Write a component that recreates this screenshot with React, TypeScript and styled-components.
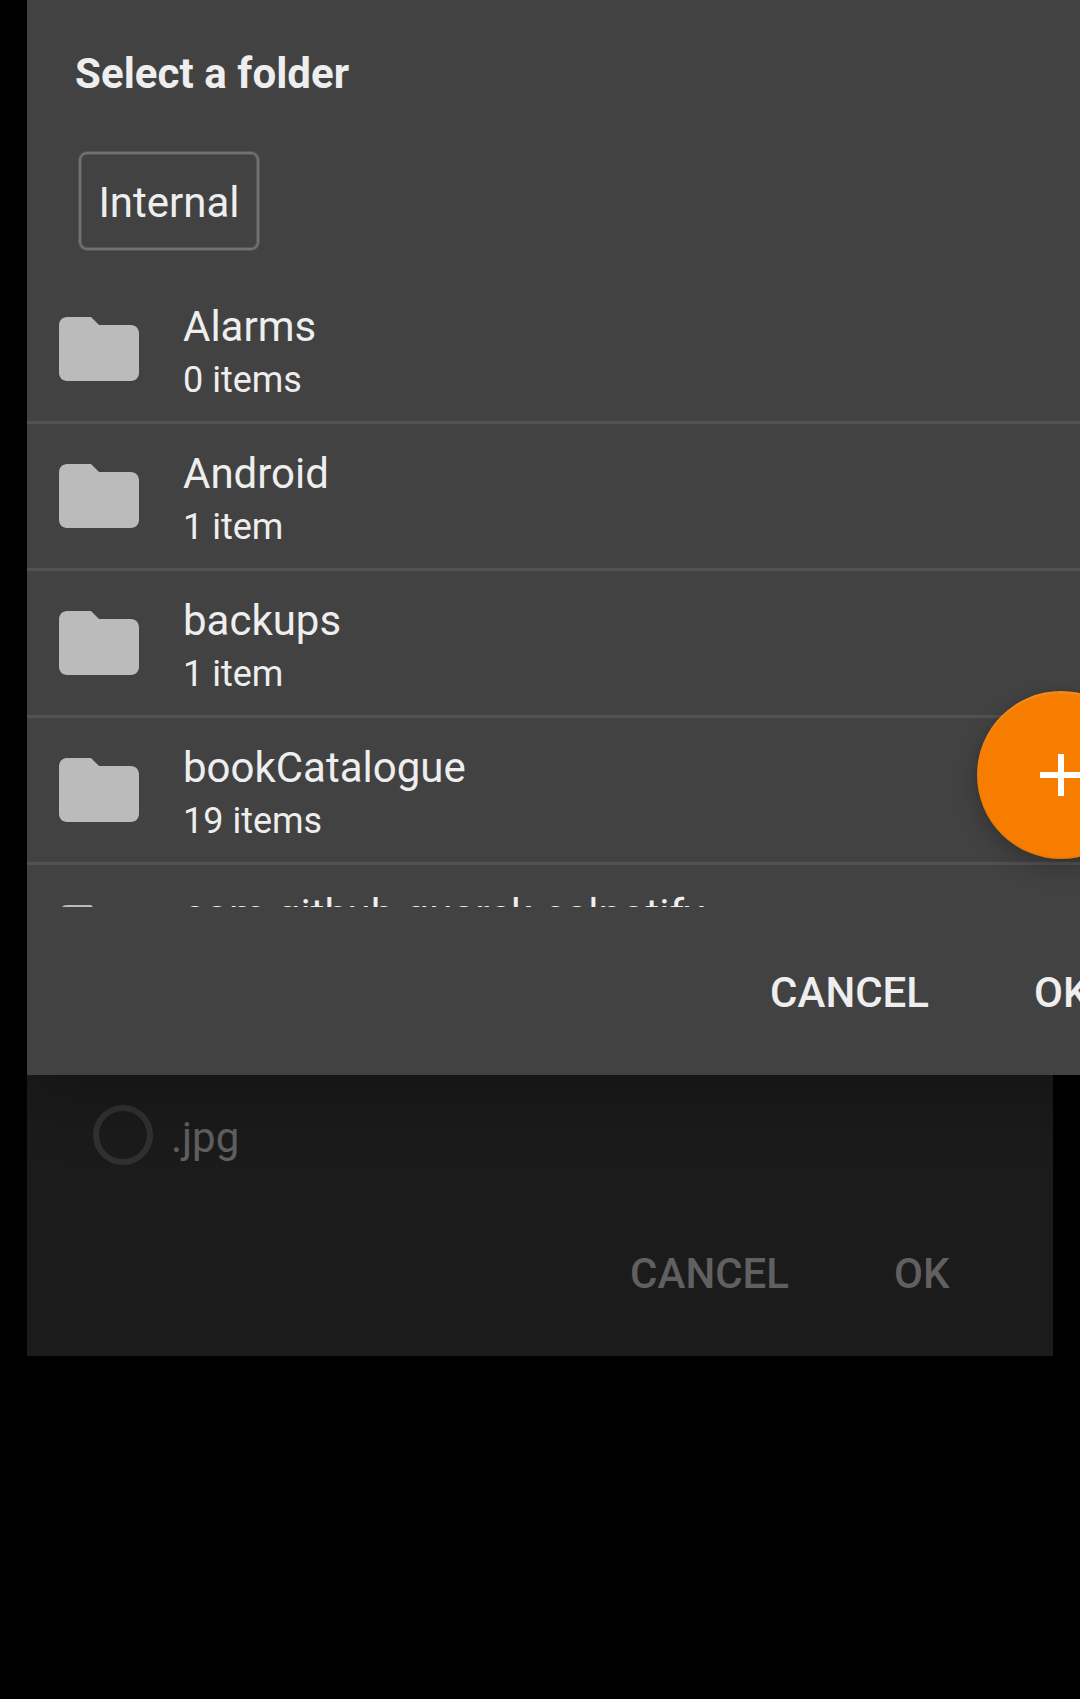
import React from "react";
import styled, { createGlobalStyle } from "styled-components";

const GlobalStyle = createGlobalStyle`
  *, *::before, *::after { box-sizing: border-box; }
  body { margin: 0; background: #000; overflow: hidden; }
  button { border: 0; background: none; padding: 0; margin: 0; font: inherit; color: inherit; }
`;

const Screen = styled.main`
  display: grid;
  grid-template-columns: 1fr;
  align-items: start;
  height: 1699px;
  padding-left: 27px;
  overflow: hidden;
  background: #000;
  color: #eee;
  font-family: Roboto, "Noto Sans", sans-serif;
  font-size: 42px;
  line-height: 50px;
`;

const Dialog = styled.section`
  grid-area: 1 / 1;
  display: flex;
  flex-direction: column;
`;

const FormatDialog = styled(Dialog)`
  width: 1026px;
  height: 1356px;
  justify-content: flex-end;
  background: #1b1b1b;
  color: #606060;
`;

const FolderDialog = styled(Dialog)`
  z-index: 1;
  width: 1166px;
  height: 1075px;
  background: #424242;
  box-shadow: 0 24px 60px rgba(0, 0, 0, 0.24);
`;

const RadioRow = styled.label`
  display: flex;
  align-items: center;
  gap: 18px;
  padding-left: 66px;
  height: 60px;
  margin-bottom: 84px;
`;

const RadioRing = styled.span`
  width: 60px;
  height: 60px;
  border: 6px solid #313131;
  border-radius: 50%;
`;

const RadioLabel = styled.span`
  padding-top: 5px;
`;

const Actions = styled.footer`
  display: flex;
  justify-content: flex-end;
  gap: 105px;
  padding-right: 103.5px;
  margin-bottom: 57px;
  font-weight: 500;
`;

const FolderActions = styled(Actions)`
  margin-bottom: 56px;
`;

const ActionButton = styled.button`
  height: 50px;
`;

const Title = styled.h1`
  margin: 49px 0 0 48px;
  font-size: 42px;
  font-weight: 700;
  letter-spacing: 0.06px;
`;

const Breadcrumb = styled.button`
  align-self: flex-start;
  width: 180px;
  height: 98px;
  margin: 53px 0 27px 52px;
  padding-top: 4px;
  border: 2px solid #727272;
  border-radius: 8px;
  box-shadow: 0 0 0 1px #565656, inset 0 0 0 1px #565656;
`;

const FolderArea = styled.div`
  position: relative;
  height: 630px;
  margin-bottom: 61px;
`;

const FolderList = styled.ul`
  height: 630px;
  margin: 0;
  padding: 0;
  overflow: hidden;
  list-style: none;
`;

const FolderRow = styled.li`
  display: flex;
  align-items: center;
  gap: 36px;
  height: 147px;
  padding-left: 24px;
  border-bottom: 3px solid #525252;
`;

const FolderIcon = styled.svg`
  flex: none;
  width: 96px;
  height: 96px;
  fill: #bbb;
`;

const FolderText = styled.div`
  display: flex;
  flex-direction: column;
  gap: 7px;
  padding-top: 5px;
  white-space: nowrap;
`;

const FolderCount = styled.span`
  font-size: 36px;
  line-height: 42px;
`;

const AddButton = styled.button`
  position: absolute;
  left: 950px;
  top: 414px;
  display: grid;
  place-items: center;
  width: 168px;
  height: 168px;
  border-radius: 50%;
  background: #f77d00;
  box-shadow: 0 10px 24px rgba(0, 0, 0, 0.2), 0 0 6px rgba(0, 0, 0, 0.1),
    inset 0 2px 2px rgba(255, 255, 255, 0.12), inset 0 -1px 2px rgba(0, 0, 0, 0.08);
`;

const PlusIcon = styled.svg`
  width: 42px;
  height: 42px;
  fill: #fff;
`;

const folders = [
  { name: "Alarms", count: "0 items" },
  { name: "Android", count: "1 item" },
  { name: "backups", count: "1 item" },
  { name: "bookCatalogue", count: "19 items" },
  { name: "com.github.quarck.calnotify", count: "" },
];

export default function App() {
  return (
    <>
      <GlobalStyle />
      <Screen>
        <FormatDialog>
          <RadioRow>
            <RadioRing />
            <RadioLabel>.jpg</RadioLabel>
          </RadioRow>
          <Actions>
            <ActionButton>CANCEL</ActionButton>
            <ActionButton>OK</ActionButton>
          </Actions>
        </FormatDialog>
        <FolderDialog>
          <Title>Select a folder</Title>
          <Breadcrumb>Internal</Breadcrumb>
          <FolderArea>
            <FolderList>
              {folders.map((folder) => (
                <FolderRow key={folder.name}>
                  <FolderIcon viewBox="0 0 24 24">
                    <path d="M10 4H4c-1.1 0-1.99.9-1.99 2L2 18c0 1.1.9 2 2 2h16c1.1 0 2-.9 2-2V8c0-1.1-.9-2-2-2h-8l-2-2z" />
                  </FolderIcon>
                  <FolderText>
                    <span>{folder.name}</span>
                    <FolderCount>{folder.count || "\u00a0"}</FolderCount>
                  </FolderText>
                </FolderRow>
              ))}
            </FolderList>
            <AddButton aria-label="Add">
              <PlusIcon viewBox="0 0 14 14">
                <path d="M14 8H8v6H6V8H0V6h6V0h2v6h6z" />
              </PlusIcon>
            </AddButton>
          </FolderArea>
          <FolderActions>
            <ActionButton>CANCEL</ActionButton>
            <ActionButton>OK</ActionButton>
          </FolderActions>
        </FolderDialog>
      </Screen>
    </>
  );
}
